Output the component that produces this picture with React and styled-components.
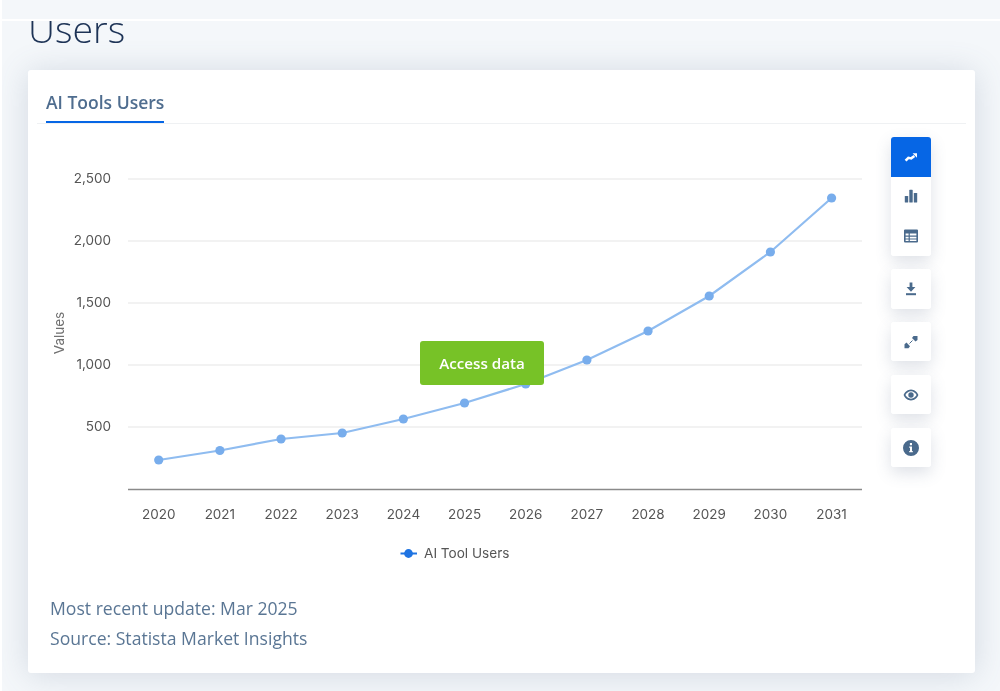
import React from "react";
import styled, { createGlobalStyle } from "styled-components";

const Global = createGlobalStyle`
  html, body { margin: 0; padding: 0; background: #fff; }
  body { font-family: "Open Sans", "Liberation Sans", sans-serif; }
`;

const Page = styled.div`
  width: 1000px;
  height: 691px;
  margin-left: 2px;
  overflow: hidden;
  background: #f4f7fa;
  filter: blur(0.45px);
`;
const TopBand = styled.div`
  height: 19px;
  border-bottom: 2px solid #fff;
`;
const HeadingClip = styled.div`
  height: 49px;
  overflow: hidden;
  padding-left: 26px;
`;
const Heading = styled.h1`
  margin: -17px 0 0;
  font-size: 37.5px;
  line-height: 50px;
  font-weight: 300;
  color: #1d3356;
`;
const Card = styled.section`
  width: 947px;
  height: 603px;
  margin-left: 26px;
  background: #fff;
  border-radius: 3px;
  box-shadow: 0 2px 32px rgba(80, 100, 130, 0.2);
`;
const TabBar = styled.div`
  height: 53px;
  margin: 0 9px;
  padding-left: 9px;
  display: flex;
  align-items: flex-end;
  border-bottom: 1px solid #eff1f3;
`;
const Tab = styled.div`
  font-size: 17.5px;
  font-weight: 600;
  line-height: 24px;
  padding-bottom: 7px;
  color: #4f6d8f;
  border-bottom: 2px solid #0666e5;
`;
const ChartRow = styled.div`
  position: relative;
  height: 469px;
  display: flex;
`;
const ChartSvg = styled.svg`
  display: block;
  width: 863px;
  height: 469px;
  flex: none;
`;
const Tools = styled.div`
  padding-top: 13px;
  display: flex;
  flex-direction: column;
  gap: 13.4px;
`;
const ToolGroup = styled.div`
  width: 40px;
  border-radius: 3px;
  background: #fff;
  overflow: hidden;
  box-shadow: 0 6px 16px rgba(70, 90, 120, 0.18);
`;
const ToolButton = styled.div`
  width: 40px;
  height: ${(p) => (p.$tall ? 39.7 : 39.5)}px;
  display: flex;
  align-items: center;
  justify-content: center;
  background: ${(p) => (p.$active ? "#0666e5" : "#fff")};
  color: ${(p) => (p.$active ? "#fff" : "#4a6a8c")};
`;
const AccessButton = styled.div`
  position: absolute;
  left: 392px;
  top: 217px;
  width: 124px;
  height: 44px;
  border-radius: 3px;
  background: #77c227;
  color: #fff;
  font-size: 15.2px;
  font-weight: 600;
  display: flex;
  align-items: center;
  justify-content: center;
`;
const Notes = styled.div`
  padding-left: 22px;
  font-size: 17.6px;
  line-height: 30px;
  color: #5a7694;
`;
const TickLabel = styled.text`
  font-family: Inter, Roboto, "Liberation Sans", sans-serif;
  font-size: 13.5px;
  fill: #555;
`;
const LegendLabel = styled(TickLabel)`
  font-size: 13.6px;
`;
const AxisTitle = styled.text`
  font-family: Inter, Roboto, "Liberation Sans", sans-serif;
  font-size: 13.5px;
  fill: #707070;
`;

const years = [2020, 2021, 2022, 2023, 2024, 2025, 2026, 2027, 2028, 2029, 2030, 2031];
const ys = [460, 450.5, 439, 433, 419, 403, 384, 360, 331, 296, 252, 198];
const xs = years.map((_, i) => 158.7 + i * 61.17);
const grid = [
  ["2,500", 179],
  ["2,000", 241],
  ["1,500", 303],
  ["1,000", 365],
  ["500", 427],
];

const Icon = ({ children }) => (
  <svg width="16" height="16" viewBox="0 0 16 16" fill="currentColor">{children}</svg>
);

const App = () => (
  <Page>
    <Global />
    <TopBand />
    <HeadingClip>
      <Heading>Users</Heading>
    </HeadingClip>
    <Card>
      <TabBar>
        <Tab>AI Tools Users</Tab>
      </TabBar>
      <ChartRow>
        <ChartSvg viewBox="28 124 863 469">
          {grid.map(([label, y]) => (
            <g key={label}>
              <line x1="128" x2="862" y1={y} y2={y} stroke="#eeeeee" strokeWidth="1.5" />
              <TickLabel x="111" y={y + 4} textAnchor="end">{label}</TickLabel>
            </g>
          ))}
          <line x1="128" x2="862" y1="489.5" y2="489.5" stroke="#8a8a8a" strokeWidth="1.5" />
          {years.map((year, i) => (
            <TickLabel key={year} x={xs[i]} y="518.5" textAnchor="middle">{year}</TickLabel>
          ))}
          <AxisTitle x="0" y="0" textAnchor="middle" transform="translate(64 333) rotate(-90)">Values</AxisTitle>
          <polyline
            points={xs.map((x, i) => `${x},${ys[i]}`).join(" ")}
            fill="none"
            stroke="#8fbcf0"
            strokeWidth="2.2"
          />
          {xs.map((x, i) => (
            <circle key={x} cx={x} cy={ys[i]} r="4.6" fill="#78adec" />
          ))}
          <line x1="400.5" x2="417" y1="553.5" y2="553.5" stroke="#1f74e2" strokeWidth="2" />
          <circle cx="408.5" cy="553.5" r="4.4" fill="#1f74e2" />
          <LegendLabel x="424" y="558">AI Tool Users</LegendLabel>
        </ChartSvg>
        <Tools>
          <ToolGroup>
            <ToolButton $active>
              <Icon>
                <path d="M2.6 11.6 L5.4 8.8 L8.2 9.4 L11.4 7" fill="none" stroke="currentColor" strokeWidth="2.6" />
                <path d="M9.6 4.2 H14 V8.8 Z" />
              </Icon>
            </ToolButton>
            <ToolButton>
              <Icon>
                <rect x="1.8" y="8" width="3.4" height="6.5" rx=".6" />
                <rect x="6.3" y="1.8" width="3.4" height="12.7" rx=".6" />
                <rect x="10.8" y="5" width="3.4" height="9.5" rx=".6" />
              </Icon>
            </ToolButton>
            <ToolButton $tall>
              <Icon>
                <path fillRule="evenodd" d="M2 1.5 H14 A1 1 0 0 1 15 2.5 V13.5 A1 1 0 0 1 14 14.5 H2 A1 1 0 0 1 1 13.5 V2.5 A1 1 0 0 1 2 1.5 Z M2.6 5.4 V7.4 H5.6 V5.4 Z M6.8 5.4 V7.4 H13.4 V5.4 Z M2.6 8.8 V10.6 H5.6 V8.8 Z M6.8 8.8 V10.6 H13.4 V8.8 Z M2.6 11.6 V13 H5.6 V11.6 Z M6.8 11.6 V13 H13.4 V11.6 Z" />
              </Icon>
            </ToolButton>
          </ToolGroup>
          <ToolGroup>
            <ToolButton>
              <Icon>
                <path d="M6.6 1.5 H9.4 V6 H12.4 L8 10.8 L3.6 6 H6.6 Z" />
                <rect x="3" y="12.2" width="10" height="2" />
              </Icon>
            </ToolButton>
          </ToolGroup>
          <ToolGroup>
            <ToolButton>
              <Icon>
                <path d="M6.5 9.5 L9.5 6.5" stroke="currentColor" strokeWidth="1" />
                <path d="M10.5 2 H14.5 V6 L12.5 7.6 L9 4 Z" />
                <path d="M5.5 14.2 H1.5 V10.2 L3.5 8.6 L7 12.2 Z" />
              </Icon>
            </ToolButton>
          </ToolGroup>
          <ToolGroup>
            <ToolButton>
              <Icon>
                <path fillRule="evenodd" d="M8 2.5 C11.5 2.5 14.4 5.4 15.4 8 C14.4 10.6 11.5 13.5 8 13.5 C4.5 13.5 1.6 10.6 .6 8 C1.6 5.4 4.5 2.5 8 2.5 Z M8 4.3 C5.5 4.3 3.4 6.2 2.4 8 C3.4 9.8 5.5 11.7 8 11.7 C10.5 11.7 12.6 9.8 13.6 8 C12.6 6.2 10.5 4.3 8 4.3 Z" />
                <circle cx="8" cy="8" r="2.7" />
              </Icon>
            </ToolButton>
          </ToolGroup>
          <ToolGroup>
            <ToolButton>
              <Icon>
                <path fillRule="evenodd" d="M8 0 A8 8 0 1 1 8 16 A8 8 0 1 1 8 0 Z M6.9 3 V5.2 H9 V3 Z M6.2 6.6 V7.8 H7 V11 H6.2 V12.3 H9.8 V11 H9 V6.6 Z" />
              </Icon>
            </ToolButton>
          </ToolGroup>
        </Tools>
        <AccessButton>Access data</AccessButton>
      </ChartRow>
      <Notes>
        <div>Most recent update: Mar 2025</div>
        <div>Source: Statista Market Insights</div>
      </Notes>
    </Card>
  </Page>
);

export default App;
